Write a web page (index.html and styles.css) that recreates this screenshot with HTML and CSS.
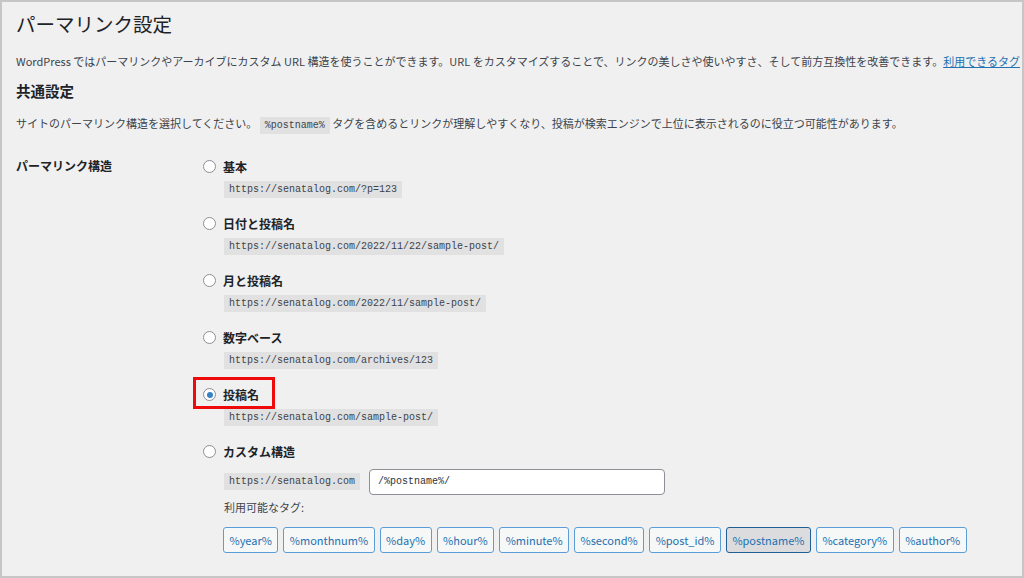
FILE: index.html
```html
<!DOCTYPE html>
<html lang="ja">
<head>
<meta charset="utf-8">
<title>パーマリンク設定</title>
<link rel="stylesheet" href="styles.css">
</head>
<body>
<div class="frame">
  <div class="wrap">
    <h1 class="title">パーマリンク設定</h1>
    <p class="intro">WordPress ではパーマリンクやアーカイブにカスタム URL 構造を使うことができます。URL をカスタマイズすることで、リンクの美しさや使いやすさ、そして前方互換性を改善できます。<a href="#" class="link">利用できるタグ</a></p>
    <h2 class="section">共通設定</h2>
    <p class="desc">サイトのパーマリンク構造を選択してください。 <code class="code">%postname%</code> タグを含めるとリンクが理解しやすくなり、投稿が検索エンジンで上位に表示されるのに役立つ可能性があります。</p>

    <div class="form">
      <div class="th">パーマリンク構造</div>
      <div class="td">
        <div class="option">
          <div class="opt-head"><span class="radio"></span><span class="opt-label">基本</span></div>
          <div class="opt-code"><code class="code">https://senatalog.com/?p=123</code></div>
        </div>
        <div class="option">
          <div class="opt-head"><span class="radio"></span><span class="opt-label">日付と投稿名</span></div>
          <div class="opt-code"><code class="code">https://senatalog.com/2022/11/22/sample-post/</code></div>
        </div>
        <div class="option">
          <div class="opt-head"><span class="radio"></span><span class="opt-label">月と投稿名</span></div>
          <div class="opt-code"><code class="code">https://senatalog.com/2022/11/sample-post/</code></div>
        </div>
        <div class="option">
          <div class="opt-head"><span class="radio"></span><span class="opt-label">数字ベース</span></div>
          <div class="opt-code"><code class="code">https://senatalog.com/archives/123</code></div>
        </div>
        <div class="option">
          <div class="opt-head"><span class="radio checked"></span><span class="opt-label">投稿名</span><span class="highlight"></span></div>
          <div class="opt-code"><code class="code">https://senatalog.com/sample-post/</code></div>
        </div>
        <div class="option">
          <div class="opt-head"><span class="radio"></span><span class="opt-label">カスタム構造</span></div>
          <div class="opt-code custom"><code class="code">https://senatalog.com</code><span class="input">/%postname%/</span></div>
          <div class="tags-title">利用可能なタグ:</div>
          <div class="tags">
            <span class="tag">%year%</span>
            <span class="tag">%monthnum%</span>
            <span class="tag">%day%</span>
            <span class="tag">%hour%</span>
            <span class="tag">%minute%</span>
            <span class="tag">%second%</span>
            <span class="tag">%post_id%</span>
            <span class="tag active">%postname%</span>
            <span class="tag">%category%</span>
            <span class="tag">%author%</span>
          </div>
        </div>
      </div>
    </div>
  </div>
</div>
</body>
</html>
```
FILE: styles.css
```css
html, body {
  margin: 0;
  padding: 0;
  background: #f0f0f1;
}
body {
  font-family: "Noto Sans CJK JP", "Noto Sans", sans-serif;
  color: #3c434a;
  font-size: 11px;
}
.frame {
  box-sizing: border-box;
  width: 1024px;
  height: 578px;
  border: 2px solid #c6c6c6;
  background: #f0f0f1;
  overflow: hidden;
}
.wrap {
  padding: 0 0 0 14px;
}
.title {
  margin: 0;
  padding-top: 9px;
  font-size: 19.5px;
  font-weight: 400;
  line-height: 26px;
  color: #1d2327;
}
.intro {
  margin: 13px 0 0;
  line-height: 22px;
  white-space: nowrap;
}
.link {
  color: #2271b1;
  text-decoration: underline;
}
.section {
  margin: 8px 0 0;
  font-size: 14.5px;
  font-weight: 700;
  line-height: 22px;
  color: #1d2327;
}
.desc {
  margin: 10px 0 0;
  line-height: 22px;
  white-space: nowrap;
}
.code {
  font-family: "Liberation Mono", "DejaVu Sans Mono", monospace;
  font-size: 10px;
  line-height: 17px;
  background: #e1e1e2;
  padding: 0 5px;
  color: #3c434a;
}
.desc .code {
  padding: 3px 5px;
  line-height: 1;
}
.form {
  display: grid;
  grid-template-columns: 187px 1fr;
  margin-top: 22px;
}
.th {
  font-weight: 700;
  font-size: 12px;
  color: #1d2327;
  line-height: 20px;
}
.option {
  margin-bottom: 13.2px;
}
.opt-head {
  display: flex;
  align-items: center;
  gap: 7px;
  height: 20px;
  position: relative;
}
.radio {
  box-sizing: border-box;
  width: 13px;
  height: 13px;
  border: 1px solid #8c8f94;
  border-radius: 50%;
  background: #fff;
  display: flex;
  align-items: center;
  justify-content: center;
}
.radio.checked::after {
  content: "";
  width: 6px;
  height: 6px;
  border-radius: 50%;
  background: #3582c4;
}
.opt-label {
  font-weight: 700;
  font-size: 12px;
  color: #1d2327;
}
.highlight {
  position: absolute;
  left: -10px;
  top: -8px;
  width: 82px;
  height: 32px;
  box-sizing: border-box;
  border: 3px solid #ee0a0a;
}
.opt-code {
  display: flex;
  align-items: center;
  height: 22px;
  margin-top: 2px;
  padding-left: 21px;
}
.opt-code .code {
  display: block;
}
.opt-code.custom {
  gap: 9px;
  height: 26px;
  margin-top: 7px;
}
.input {
  box-sizing: border-box;
  width: 296px;
  height: 26px;
  background: #fff;
  border: 1px solid #8c8f94;
  border-radius: 4px;
  padding: 0 8px;
  font-family: "Liberation Mono", "DejaVu Sans Mono", monospace;
  font-size: 10px;
  line-height: 24px;
  color: #2c3338;
}
.tags-title {
  padding-left: 21px;
  margin-top: 2px;
  line-height: 20px;
}
.tags {
  display: flex;
  gap: 5px;
  padding-left: 20px;
  margin-top: 10px;
}
.tag {
  box-sizing: border-box;
  height: 26px;
  line-height: 24px;
  padding: 0 5.5px;
  border: 1px solid #5b9dd9;
  border-radius: 3px;
  background: #f6f7f7;
  color: #2271b1;
  font-size: 11px;
}
.tag.active {
  background: #dcdcde;
  border-color: #1f5f94;
  color: #2271b1;
}
```
